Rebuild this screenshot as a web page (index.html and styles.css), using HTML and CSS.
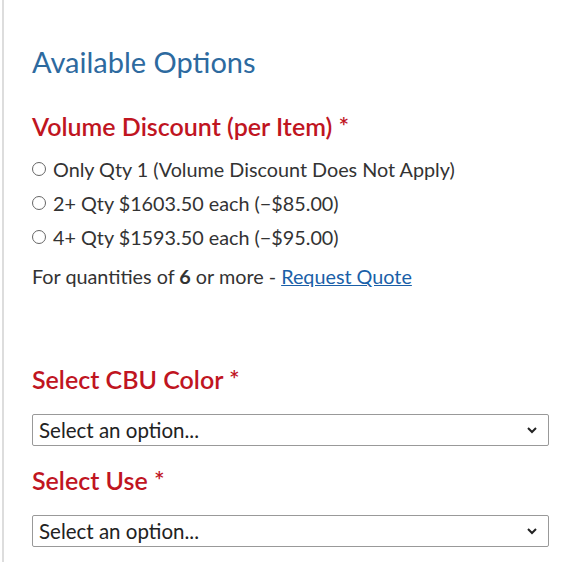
FILE: index.html
```html
<!DOCTYPE html>
<html lang="en">
<head>
    <meta charset="UTF-8">
    <meta name="viewport" content="width=device-width, initial-scale=1.0">
    <title>Available Options</title>
    <link rel="stylesheet" href="styles.css">
</head>
<body>

    <div class="options-panel">
        <h2 class="options-title">Available Options</h2>

        <!-- Volume discount radios -->
        <h3 class="field-label">Volume Discount (per Item) *</h3>
        <div class="radio-list">
            <label class="radio-row"><input type="radio" name="qty"> Only Qty 1 (Volume Discount Does Not Apply)</label>
            <label class="radio-row"><input type="radio" name="qty"> 2+ Qty $1603.50 each (&minus;$85.00)</label>
            <label class="radio-row"><input type="radio" name="qty"> 4+ Qty $1593.50 each (&minus;$95.00)</label>
        </div>
        <p class="quote-note">For quantities of <b>6</b> or more - <a href="#">Request Quote</a></p>

        <!-- Dropdowns -->
        <h3 class="field-label select-label spaced">Select CBU Color *</h3>
        <div class="select-box">
            <span>Select an option...</span>
            <svg width="12" height="8" viewBox="0 0 12 8"><path d="M2 2l4 4 4-4" fill="none" stroke="#222" stroke-width="2"/></svg>
        </div>

        <h3 class="field-label select-label">Select Use *</h3>
        <div class="select-box">
            <span>Select an option...</span>
            <svg width="12" height="8" viewBox="0 0 12 8"><path d="M2 2l4 4 4-4" fill="none" stroke="#222" stroke-width="2"/></svg>
        </div>
    </div>

</body>
</html>
```

FILE: styles.css
```css
body {
    margin: 0;
    padding: 0;
    background-color: #fff;
    font-family: Lato, "Liberation Sans", sans-serif;
    color: #333;
}

.options-panel {
    border-left: 2px solid #ddd;
    margin-left: 2px;
    padding: 44px 13px 20px 28px;
    min-height: 562px;
    box-sizing: border-box;
}

.options-title {
    margin: 0 0 31px;
    font-size: 29px;
    font-weight: normal;
    color: #2d6a9f;
    line-height: 36px;
}

.field-label {
    margin: 0 0 11px;
    font-size: 25px;
    font-weight: 600;
    color: #c0151f;
    line-height: 30px;
}

.field-label.select-label {
    margin-bottom: 20px;
}

.field-label.spaced {
    margin-top: 75px;
}

.radio-list {
    display: flex;
    flex-direction: column;
}

.radio-row {
    display: flex;
    align-items: center;
    gap: 7px;
    font-size: 19.8px;
    line-height: 34px;
}

/* custom radio circle, closer to the screenshot */
.radio-row input {
    appearance: none;
    margin: 0;
    width: 14px;
    height: 14px;
    border: 1px solid #666;
    border-radius: 50%;
    background: #fff;
    box-sizing: border-box;
    flex-shrink: 0;
}

.quote-note {
    margin: 9px 0 0;
    font-size: 19.8px;
    line-height: 26px;
}

.quote-note a {
    color: #1a5fa8;
}

.select-box {
    display: flex;
    align-items: center;
    justify-content: space-between;
    height: 32px;
    box-sizing: border-box;
    border: 1px solid #999;
    border-radius: 2px;
    padding: 0 10px 0 6px;
    font-size: 20.5px;
    color: #222;
    margin-bottom: 19px;
}
```
